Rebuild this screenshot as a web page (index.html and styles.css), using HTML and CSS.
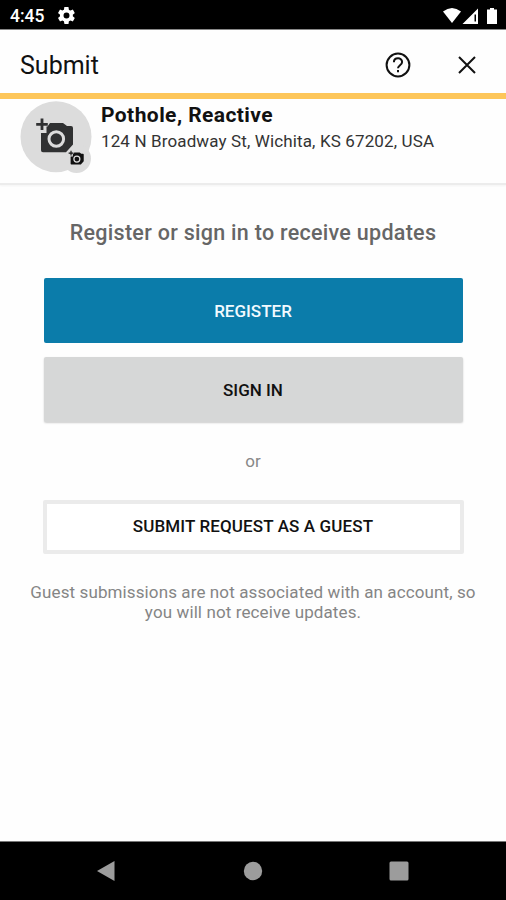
FILE: index.html
```html
<!DOCTYPE html>
<html lang="en">
<head>
    <meta charset="utf-8">
    <title>Submit</title>
    <link rel="stylesheet" href="styles.css">
</head>
<body>
    <div class="status-bar">
        <span class="clock">4:45</span>
        <svg class="gear" viewBox="2 2 20 20" width="17" height="17">
            <path fill-rule="evenodd" d="M19.4 13c0-.3.1-.6.1-1s0-.7-.1-1l2.100-1.600c.2-.2.3-.4.1-.7l-2-3.400c-.1-.2-.4-.3-.6-.2l-2.500 1c-.5-.4-1.100-.7-1.700-1l-.4-2.600c0-.3-.2-.5-.5-.5h-4c-.3 0-.5.2-.5.4l-.4 2.700c-.6.2-1.100.6-1.700 1l-2.500-1c-.2-.1-.5 0-.6.2l-2 3.400c-.1.2-.1.5.1.7L4.400 11c0 .3-.1.600-.1 1s0 .7.1 1l-2.100 1.600c-.2.2-.3.4-.1.7l2 3.400c.1.2.4.3.6.2l2.500-1c.5.4 1.100.7 1.700 1l.4 2.600c0 .3.2.5.5.5h4c.3 0 .5-.2.5-.4l.4-2.700c.6-.2 1.100-.6 1.700-1l2.500 1c.2.1.5 0 .6-.2l2-3.400c.1-.2.1-.5-.1-.7zM12 8.500a3.500 3.500 0 1 0 0 7 3.500 3.500 0 0 0 0-7z"/>
        </svg>
        <svg class="signals" width="58" height="18" viewBox="0 0 58 18">
            <path d="M3 4.500Q12-2.500 21 4.500L12 16z"/>
            <path fill-rule="evenodd" d="M22.500 17 38 1.500V17zM34.500 7.500v7h1.500v-7z"/>
            <path d="M47 2.500h3V1h4v1.500h3V17H47z"/>
        </svg>
    </div>

    <header class="app-bar">
        <h1>Submit</h1>
        <svg class="help" width="26" height="26" viewBox="0 0 26 26">
            <circle cx="13" cy="13" r="11.400"/>
            <path d="M8.900 10.200c0-5.200 8.200-5.200 8.200-.2 0 3.200-4.100 3.300-4.100 6.300"/>
            <path d="M13 18v2.300"/>
        </svg>
        <svg class="close" width="18" height="18" viewBox="0 0 18 18">
            <path d="M1 1 17 17M17 1 1 17"/>
        </svg>
    </header>

    <section class="request">
        <svg class="photo" width="72" height="73" viewBox="0 0 72 73">
            <defs>
                <g id="camera">
                    <path d="M27.500 25.500 30 22h13l4 3h4q2 0 2 2v16.500l-7 7.800H23q-2 0-2-2V32h5.500v-6.500z"/>
                    <circle class="lens" cx="36.300" cy="38" r="7.300"/>
                    <path d="M20.600 17.500h2.800v4.400h4.400v2.800h-4.400v4.400h-2.800v-4.400h-4.400v-2.800h4.400z"/>
                </g>
            </defs>
            <g class="disc">
                <circle cx="36" cy="35.700" r="35.500"/>
                <circle cx="56.500" cy="57.500" r="14.500"/>
            </g>
            <use href="#camera"/>
            <use class="small" href="#camera" transform="translate(42 42.500) scale(.41)"/>
        </svg>
        <div class="details">
            <h2>Pothole, Reactive</h2>
            <p>124 N Broadway St, Wichita, KS 67202, USA</p>
        </div>
    </section>

    <main>
        <h3>Register or sign in to receive updates</h3>
        <button class="btn register">REGISTER</button>
        <button class="btn sign-in">SIGN IN</button>
        <p class="or">or</p>
        <button class="btn guest">SUBMIT REQUEST AS A GUEST</button>
        <p class="note">Guest submissions are not associated with an account, so<br>you will not receive updates.</p>
    </main>

    <nav class="nav-bar">
        <svg width="20" height="22" viewBox="0 0 20 22"><path d="M1 11 18.500 1v20z"/></svg>
        <svg width="20" height="20" viewBox="0 0 20 20"><circle cx="10" cy="10" r="9.200"/></svg>
        <svg width="20" height="20" viewBox="0 0 20 20"><rect x=".5" y=".5" width="19" height="19" rx="1.500"/></svg>
    </nav>
</body>
</html>
```
FILE: styles.css
```css
* {
    box-sizing: border-box;
}
body {
    display: flex;
    flex-direction: column;
    height: 900px;
    margin: 0;
    font-family: Roboto, sans-serif;
    color: #111;
    background: #fefefe;
}
h1, h2, h3, p {
    margin: 0;
}
.status-bar {
    display: flex;
    align-items: center;
    height: 30px;
    padding: 2px 8px 0 10px;
    background: #000;
    border-bottom: 1px solid #888;
    color: #fff;
    fill: #fff;
}
.clock {
    width: 48px;
    font-size: 17.5px;
    font-weight: 500;
}
.signals {
    margin-left: auto;
}
.app-bar {
    display: flex;
    align-items: center;
    height: 63px;
    padding: 6px 30px 0 20px;
}
h1 {
    flex: 1;
    padding-top: 2px;
    font-size: 25px;
    font-weight: 400;
}
.help, .close {
    fill: none;
    stroke: #111;
    stroke-width: 2;
}
.help {
    margin-right: 47px;
}
.request {
    display: flex;
    height: 92px;
    padding: 2px 20px 0;
    border-top: 6px solid #fdc65a;
    border-bottom: 2px solid #ececec;
    box-shadow: 0 1px 2px #f3f3f3;
}
.photo {
    fill: #303132;
}
.disc {
    fill: #dcdcdc;
}
.lens {
    fill: none;
    stroke: #dcdcdc;
    stroke-width: 3;
}
.small {
    fill: #111;
}
.details {
    margin-left: 9px;
}
h2 {
    font-size: 21px;
    font-weight: 700;
    line-height: 28px;
    letter-spacing: 0.43px;
}
.details p {
    font-size: 17px;
    line-height: 25px;
    letter-spacing: 0.13px;
    color: #333;
}
main {
    display: flex;
    flex: 1;
    flex-direction: column;
    align-items: center;
    padding-top: 34px;
}
h3 {
    margin-bottom: 31px;
    font-size: 21.5px;
    font-weight: 500;
    line-height: 28px;
    letter-spacing: 0.28px;
    color: #666;
}
.btn {
    width: 419px;
    height: 65px;
    padding: 0;
    border: 0;
    border-radius: 2px;
    font: 500 17px Roboto, sans-serif;
    color: #111;
}
.register {
    margin-bottom: 14px;
    background: #0b7caa;
    color: #f2faff;
}
.sign-in {
    background: #d6d7d7;
    box-shadow: 0 1px 2px #ccc;
}
.or {
    margin: 28px 0;
    font-size: 17px;
    line-height: 22px;
    color: #888;
}
.guest {
    width: 421px;
    height: 54px;
    padding-bottom: 2px;
    border: 4px solid #ebebeb;
    background: #fff;
    letter-spacing: 0.12px;
}
.note {
    margin-top: 28px;
    font-size: 17px;
    line-height: 20px;
    letter-spacing: 0.11px;
    text-align: center;
    color: #858585;
}
.nav-bar {
    display: flex;
    justify-content: space-between;
    align-items: center;
    height: 59px;
    padding: 0 97px 0 96px;
    border-top: 1px solid #777;
    background: #000;
    fill: #9c9c9c;
}
```
